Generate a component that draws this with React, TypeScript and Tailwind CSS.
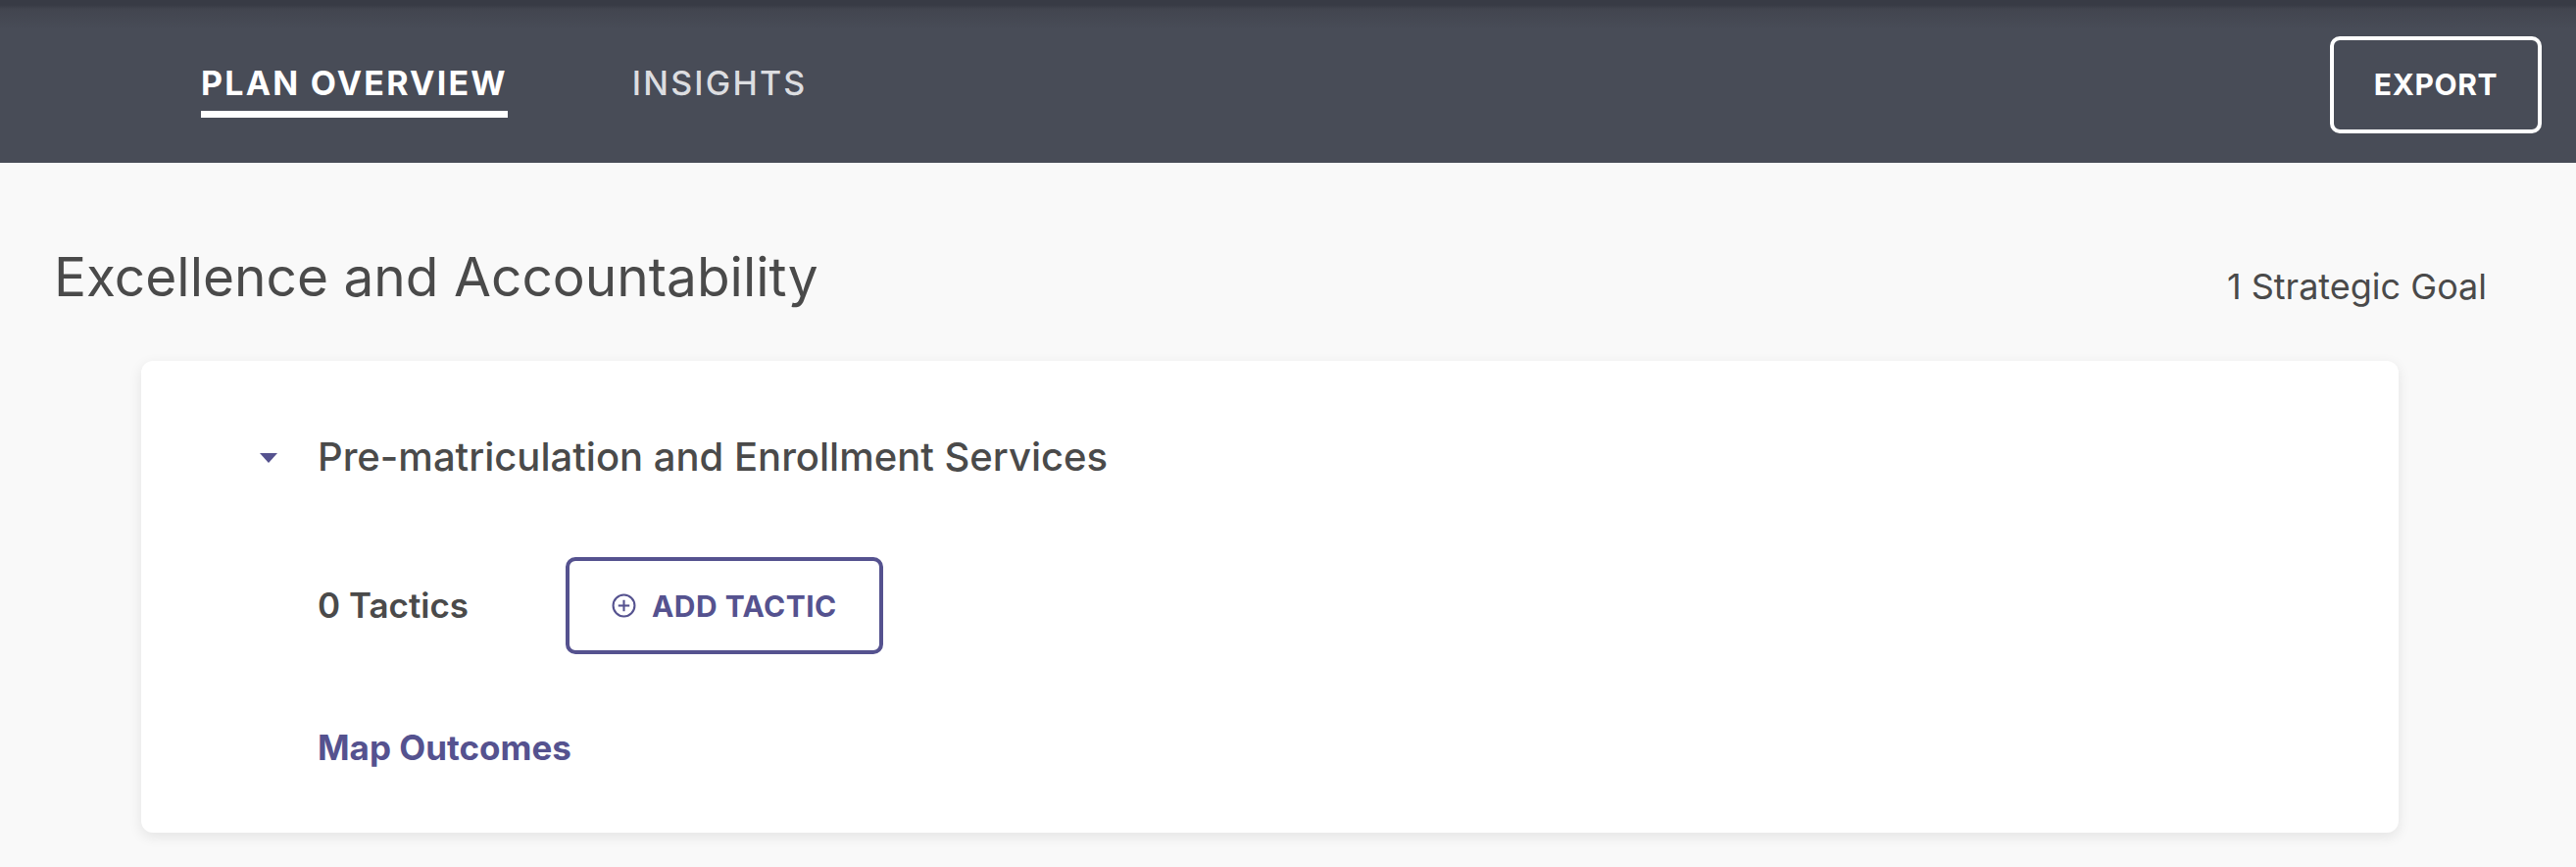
import React from "react";

const Header = () => {
  return (
    <div className="h-[166px] flex items-center justify-between bg-[linear-gradient(to_bottom,#383b45_0px,#383b45_5px,#42454f_9px,#484c57_30px)] pr-[35px]">
      <div className="flex items-start pl-[205px] pt-[22px] gap-[127px]">
        <div className="flex flex-col">
          <span className="text-[34px] leading-none font-bold text-white tracking-[0.065em]">PLAN OVERVIEW</span>
          <div className="h-[7px] bg-white mt-[11px]"></div>
        </div>
        <span className="text-[34px] leading-none font-medium text-[#dcdde0] tracking-[0.065em]">INSIGHTS</span>
      </div>
      <button className="w-[216px] h-[99px] border-4 border-white rounded-[10px] text-white text-[30px] font-bold tracking-[0.02em] flex items-center justify-center mt-[6px]">
        EXPORT
      </button>
    </div>
  );
};

const AddTactic = () => {
  return (
    <button className="w-[324px] h-[99px] border-4 border-[#55528f] rounded-[10px] flex items-center pl-[43px] gap-[16px] text-[#55528f]">
      <svg width="25" height="25" viewBox="0 0 24 24" fill="none" stroke="currentColor" strokeWidth="2">
        <circle cx="12" cy="12" r="10.5" />
        <line x1="12" y1="6.5" x2="12" y2="17.5" />
        <line x1="6.5" y1="12" x2="17.5" y2="12" />
      </svg>
      <span className="text-[30px] font-bold leading-none tracking-[0.015em]">ADD TACTIC</span>
    </button>
  );
};

export default function App() {
  return (
    <div className="min-h-screen bg-[#f9f9f9] font-['Inter',sans-serif] text-[#4a4a4a]">
      <Header />
      <div className="pt-[89px] pl-[55px] pr-[91px] flex justify-between items-start">
        <h1 className="text-[55px] leading-none font-normal">Excellence and Accountability</h1>
        <span className="text-[36px] leading-none mt-[19px]">1 Strategic Goal</span>
      </div>
      <div className="ml-[144px] mr-[181px] mt-[58px] bg-white rounded-[12px] shadow-[0_4px_14px_rgba(0,0,0,0.09)] pt-[78px] pb-[68px] pl-[121px]">
        <div className="flex items-center gap-[41px]">
          <svg width="18" height="10" viewBox="0 0 18 10" className="mt-[2px]">
            <polygon points="0,0 18,0 9,10" fill="#55528f" />
          </svg>
          <h2 className="text-[40px] leading-none font-medium">Pre-matriculation and Enrollment Services</h2>
        </div>
        <div className="pl-[59px]">
          <div className="flex items-center mt-[82px]">
            <span className="text-[35px] font-semibold leading-none w-[253px]">0 Tactics</span>
            <AddTactic />
          </div>
          <div className="mt-[78px]">
            <a className="text-[35px] font-bold leading-none text-[#55528f] cursor-pointer">Map Outcomes</a>
          </div>
        </div>
      </div>
    </div>
  );
}
